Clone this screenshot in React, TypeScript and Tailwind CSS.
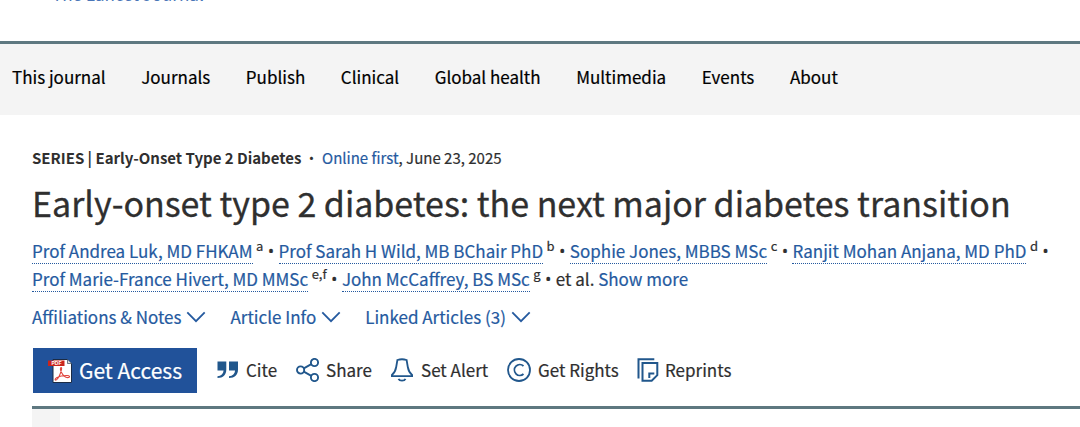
import type { ReactNode } from "react";

const navItems = [
  "This journal",
  "Journals",
  "Publish",
  "Clinical",
  "Global health",
  "Multimedia",
  "Events",
  "About",
];

const authorRows = [
  [
    { name: "Prof Andrea Luk, MD FHKAM", note: "a" },
    { name: "Prof Sarah H Wild, MB BChair PhD", note: "b" },
    { name: "Sophie Jones, MBBS MSc", note: "c" },
    { name: "Ranjit Mohan Anjana, MD PhD", note: "d" },
  ],
  [
    { name: "Prof Marie-France Hivert, MD MMSc", note: "e,f" },
    { name: "John McCaffrey, BS MSc", note: "g" },
  ],
];

const Chevron = () => (
  <svg width="20" height="12" viewBox="0 0 20 12" fill="none" stroke="#255a9f" strokeWidth="1.8">
    <path d="M1.3 1.3 10 10.2 18.7 1.3" />
  </svg>
);

const PdfIcon = () => (
  <svg width="26" height="26" viewBox="0 0 26 26" fill="none">
    <path d="M6 1.5h14.500l4 4V24.500H6z" fill="#fff" stroke="#1b2b45" strokeWidth="1" />
    <path d="M20.500 1.500v4h4" fill="#ddd" stroke="#1b2b45" strokeWidth=".6" />
    <path d="M1 2.500h16.500v5.500H1z" fill="#c9251c" />
    <text x="4.500" y="7" fontSize="5" fontWeight="700" fill="#fff" fontFamily="Liberation Sans, sans-serif">
      PDF
    </text>
    <path
      d="M14 9.500c-1 .2-.7 2.600.4 4.800 1.500 3 4.500 5.700 7.200 5.200 1.700-.5.900-1.900-1.300-2-3.800-.1-7.800.6-10.700 2.300-1.800 1.100-1.900 2.400-.7 2.300 2.100-.3 4.700-6.400 5.600-10.700.3-1.300.1-2-.5-1.900z"
      stroke="#e0443d"
      strokeWidth="1.100"
    />
  </svg>
);

const QuoteIcon = () => (
  <svg width="22" height="18" viewBox="0 0 22 18">
    <path
      d="M.5.500h8.800v8C9.300 13.800 6.200 17 .5 17v-1.800c3.700-.3 5.800-2.500 6.100-5.700H.5zM12 .500h9v8c0 5.300-3.300 8.500-9 8.500v-1.800c3.700-.3 5.800-2.500 6.100-5.700H12z"
      fill="#21578c"
    />
  </svg>
);

const ShareIcon = () => (
  <svg width="24" height="24" viewBox="0 0 24 24" fill="none" stroke="#21578c" strokeWidth="1.900">
    <circle cx="4.600" cy="12" r="3.600" />
    <circle cx="18.500" cy="4.500" r="3.600" />
    <circle cx="18.500" cy="19.500" r="3.600" />
    <path d="m7.800 10.300 7.500-4.100M7.800 13.700l7.500 4.100" />
  </svg>
);

const BellIcon = () => (
  <svg width="24" height="24" viewBox="0 0 24 24" fill="none" stroke="#21578c" strokeWidth="1.800">
    <path d="M7.400 2c3-1 6.200-1 9.200 0l1.200 7c.5 3.200 1.600 5.800 4.300 8v1.200H1.900V17c2.700-2.200 3.800-4.800 4.300-8z" />
    <path d="M8.500 20.800c1 2.500 6 2.500 7 0" />
  </svg>
);

const CopyrightIcon = () => (
  <svg width="24" height="24" viewBox="0 0 24 24" fill="none" stroke="#21578c" strokeWidth="1.800">
    <circle cx="12" cy="12" r="11" />
    <path d="M16.500 8a5.400 5.400 0 1 0 0 8" />
  </svg>
);

const ReprintsIcon = () => (
  <svg width="22" height="24" viewBox="0 0 22 24" fill="none" stroke="#21578c" strokeWidth="2">
    <path d="M1.500 20.500V1.200h15.800" />
    <path d="M5.500 5h14.800v12.200l-5.600 5.500H5.500z" />
    <path d="M12.300 20v-4.500h5" />
  </svg>
);

const Bullet = ({ className }: { className: string }) => (
  <span className={`inline-block shrink-0 text-center font-['Noto_Sans',sans-serif] ${className}`}>•</span>
);

const Action = ({ icon, label, className }: { icon: ReactNode; label: string; className: string }) => (
  <button className={`flex shrink-0 items-center whitespace-nowrap ${className}`}>
    {icon}
    <span>{label}</span>
  </button>
);

const App = () => {
  return (
    <div className="h-[427px] w-[1080px] overflow-hidden bg-white font-['Noto_Sans_CJK_SC',sans-serif] text-[17px] text-[#2f2f2f] [-webkit-text-stroke:0.2px]">
      <div className="flex h-[41px] items-start pl-[52px]">
        <span className="-mt-[18px] text-[17px] leading-6 text-[#4a76b8] [-webkit-text-stroke:0]">
          The Lancet Journal
        </span>
      </div>
      <nav className="flex h-[74px] items-center gap-[35.6px] border-t-[3px] border-[#5e7880] bg-[#f4f4f4] pb-[5px] pl-3 text-[17px] leading-6 text-black">
        {navItems.map((item) => (
          <a key={item} className="whitespace-nowrap">
            {item}
          </a>
        ))}
      </nav>
      <main className="px-8 pt-[31px]">
        <div className="flex h-6 items-center text-[15px] leading-6 whitespace-pre">
          <span className="w-[269px] font-bold tracking-[-0.02px] [-webkit-text-stroke:0]">
            SERIES | Early-Onset Type 2 Diabetes
          </span>
          <Bullet className="w-[21px] text-[13px]" />
          <span className="text-[#255a9f]">Online first</span>
          <span>, June 23, 2025</span>
        </div>
        <h1 className="mt-[7px] h-[52px] text-[34px] leading-[52px] tracking-[-0.02px] whitespace-nowrap [-webkit-text-stroke:0.3px]">
          Early-onset type 2 diabetes: the next major diabetes transition
        </h1>
        <div className="mt-[9px]">
          {authorRows.map((row, i) => (
            <div key={i} className="flex h-[28px] items-start leading-[25px] whitespace-nowrap">
              {row.map((author) => (
                <span key={author.name} className="flex">
                  <a className="h-[26px] border-b border-dotted border-[#255a9f] text-[#255a9f]">{author.name}</a>
                  <span className="ml-[3.5px] -mt-[5px] text-[13px]">{author.note}</span>
                  <Bullet className="mt-px w-[15.2px] text-[16px]" />
                </span>
              ))}
              {i === 1 && (
                <span>
                  et al. <a className="text-[#255a9f]">Show more</a>
                </span>
              )}
            </div>
          ))}
        </div>
        <div className="mt-[11px] flex h-6 items-center gap-6 leading-6 text-[#255a9f]">
          {["Affiliations & Notes", "Article Info", "Linked Articles (3)"].map((label) => (
            <button key={label} className="flex items-center gap-[5px] whitespace-nowrap">
              {label}
              <Chevron />
            </button>
          ))}
        </div>
        <div className="mt-[19px] flex h-[45px] items-center">
          <button className="mr-5 ml-px flex h-[45px] w-[164px] shrink-0 items-center gap-1.5 bg-[#21529a] pl-3.5 text-[21px] whitespace-nowrap text-white">
            <PdfIcon />
            Get Access
          </button>
          <div className="flex items-center pb-0.5">
            <Action icon={<QuoteIcon />} label="Cite" className="w-[79px] gap-[7px]" />
            <Action icon={<ShareIcon />} label="Share" className="w-[94px] gap-1.5" />
            <Action icon={<BellIcon />} label="Set Alert" className="w-[117px] gap-[7px]" />
            <Action icon={<CopyrightIcon />} label="Get Rights" className="w-[130px] gap-[7px]" />
            <Action icon={<ReprintsIcon />} label="Reprints" className="gap-1.5" />
          </div>
        </div>
      </main>
      <div className="mt-[13px] ml-8 h-[21px] border-t-[3px] border-[#5e7880]">
        <div className="h-full w-[28px] bg-[#f4f4f4]" />
      </div>
    </div>
  );
};

export default App;
